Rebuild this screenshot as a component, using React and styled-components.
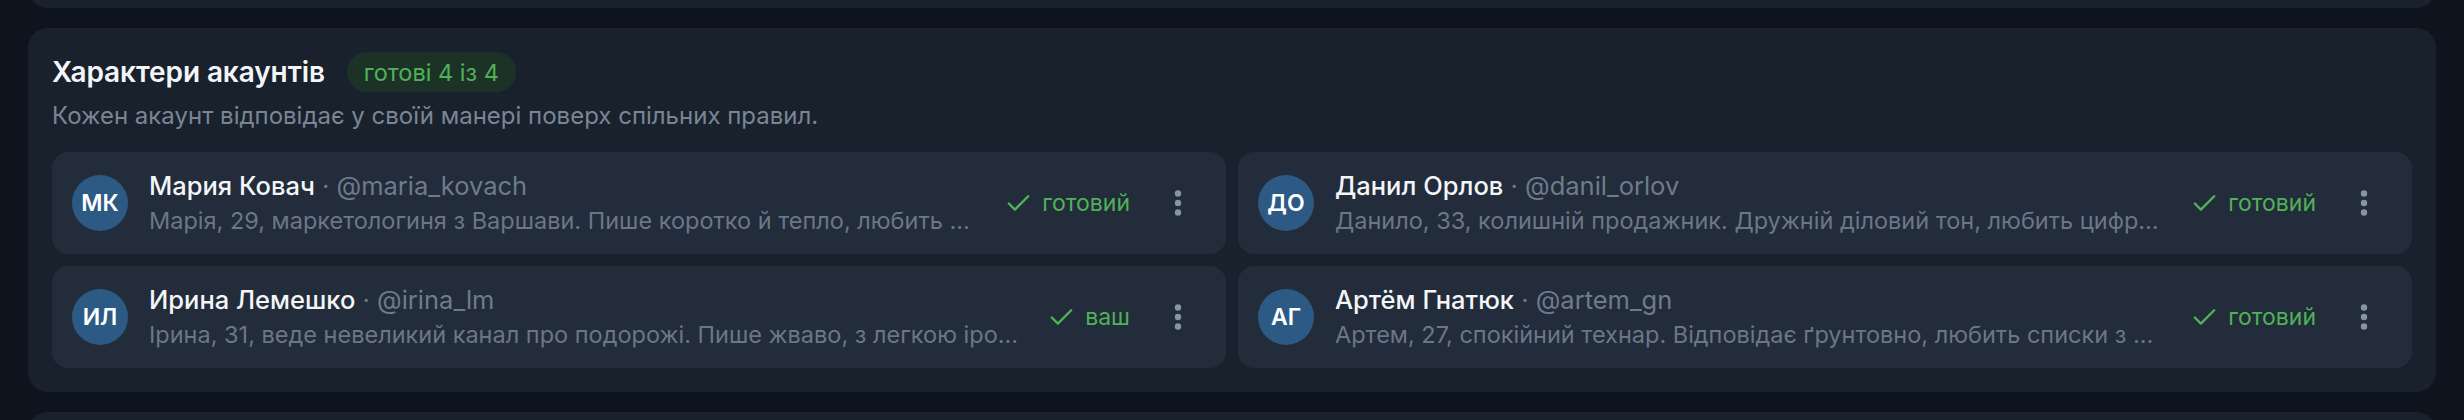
import React from 'react'
import styled, { createGlobalStyle } from 'styled-components'
import { Check } from 'lucide-react'

const GlobalStyle = createGlobalStyle`
  html, body {
    margin: 0;
    padding: 0;
    background: #0e141d;
    font-family: Inter, "Noto Sans", "DejaVu Sans", sans-serif;
  }
`

const accounts = [
  {
    initials: 'МК',
    name: 'Мария Ковач',
    handle: '@maria_kovach',
    bio: 'Марія, 29, маркетологиня з Варшави. Пише коротко й тепло, любить емодзі та живі приклади з життя.',
    status: 'готовий',
  },
  {
    initials: 'ДО',
    name: 'Данил Орлов',
    handle: '@danil_orlov',
    bio: 'Данило, 33, колишній продажник. Дружній діловий тон, любить цифри та конкретику без води.',
    status: 'готовий',
  },
  {
    initials: 'ИЛ',
    name: 'Ирина Лемешко',
    handle: '@irina_lm',
    bio: 'Ірина, 31, веде невеликий канал про подорожі. Пише жваво, з легкою іронією та деталями.',
    status: 'ваш',
  },
  {
    initials: 'АГ',
    name: 'Артём Гнатюк',
    handle: '@artem_gn',
    bio: 'Артем, 27, спокійний технар. Відповідає ґрунтовно, любить списки з прикладами та посиланнями.',
    status: 'готовий',
  },
]

const App = () => {
  return (
    <>
      <GlobalStyle />
      <Page>
        <PrevPanel />
        <Panel>
          <Header>
            <Title>Характери акаунтів</Title>
            <Badge>готові 4 із 4</Badge>
          </Header>
          <Subtitle>Кожен акаунт відповідає у своїй манері поверх спільних правил.</Subtitle>
          <Grid>
            {accounts.map((a) => (
              <Card key={a.handle}>
                <Avatar>{a.initials}</Avatar>
                <Info>
                  <NameLine>
                    <Name>{a.name}</Name>
                    <Handle> · {a.handle}</Handle>
                  </NameLine>
                  <Bio>{a.bio}</Bio>
                </Info>
                <Status>
                  <Check size={29} strokeWidth={2} />
                  {a.status}
                </Status>
                <MenuButton aria-label="menu">
                  <svg width="8" height="28" viewBox="0 0 8 28">
                    <circle cx="4" cy="4.5" r="3.2" fill="currentColor" />
                    <circle cx="4" cy="14" r="3.2" fill="currentColor" />
                    <circle cx="4" cy="23.5" r="3.2" fill="currentColor" />
                  </svg>
                </MenuButton>
              </Card>
            ))}
          </Grid>
        </Panel>
        <NextPanel />
      </Page>
    </>
  )
}

const Page = styled.div`
  display: flex;
  flex-direction: column;
  gap: 20px;
  padding: 0 28px;
  height: 420px;
  overflow: hidden;
  box-sizing: border-box;
`

const PanelBase = styled.section`
  background: #19212c;
  border-radius: 20px;
  flex-shrink: 0;
`

const PrevPanel = styled(PanelBase)`
  height: 40px;
  margin-top: -32px;
`

const NextPanel = styled(PanelBase)`
  height: 80px;
`

const Panel = styled(PanelBase)`
  padding: 24px;
`

const Header = styled.div`
  display: flex;
  align-items: center;
  gap: 22px;
  height: 40px;
  margin-bottom: 8px;
`

const Title = styled.h2`
  margin: 0;
  font-size: 28px;
  font-weight: 600;
  color: #f3f5f8;
  letter-spacing: -0.1px;
`

const Badge = styled.span`
  display: inline-flex;
  align-items: center;
  height: 40px;
  padding: 0 17px;
  border-radius: 20px;
  background: #1d3227;
  color: #4fb257;
  font-size: 23.5px;
`

const Subtitle = styled.p`
  margin: 0 0 20px;
  font-size: 24px;
  line-height: 32px;
  color: #7a8696;
`

const Grid = styled.div`
  display: grid;
  grid-template-columns: 1fr 1fr;
  gap: 12px;
`

const Card = styled.div`
  display: flex;
  align-items: center;
  height: 102px;
  padding: 0 28px 0 20px;
  border-radius: 16px;
  background: #222c3a;
  box-sizing: border-box;
  min-width: 0;
`

const Avatar = styled.div`
  flex-shrink: 0;
  width: 56px;
  height: 56px;
  border-radius: 50%;
  background: #2c5a85;
  color: #ffffff;
  display: flex;
  align-items: center;
  justify-content: center;
  font-size: 23px;
  font-weight: 600;
`

const Info = styled.div`
  flex: 1;
  min-width: 0;
  margin-left: 21px;
  display: flex;
  flex-direction: column;
  gap: 4px;
`

const NameLine = styled.div`
  font-size: 25.5px;
  line-height: 32px;
  white-space: nowrap;
  overflow: hidden;
  text-overflow: ellipsis;
`

const Name = styled.span`
  color: #f3f5f8;
  font-weight: 500;
`

const Handle = styled.span`
  color: #6f7b8b;
`

const Bio = styled.div`
  font-size: 23.5px;
  line-height: 30px;
  color: #6b7787;
  white-space: nowrap;
  overflow: hidden;
  text-overflow: ellipsis;
`

const Status = styled.div`
  flex-shrink: 0;
  display: flex;
  align-items: center;
  gap: 9px;
  margin-left: 26px;
  color: #4fb257;
  font-size: 23px;
`

const MenuButton = styled.button`
  flex-shrink: 0;
  width: 40px;
  height: 40px;
  margin-left: 28px;
  padding: 0;
  border: none;
  background: transparent;
  color: #8893a3;
  display: flex;
  align-items: center;
  justify-content: center;
  cursor: pointer;
`

export default App
